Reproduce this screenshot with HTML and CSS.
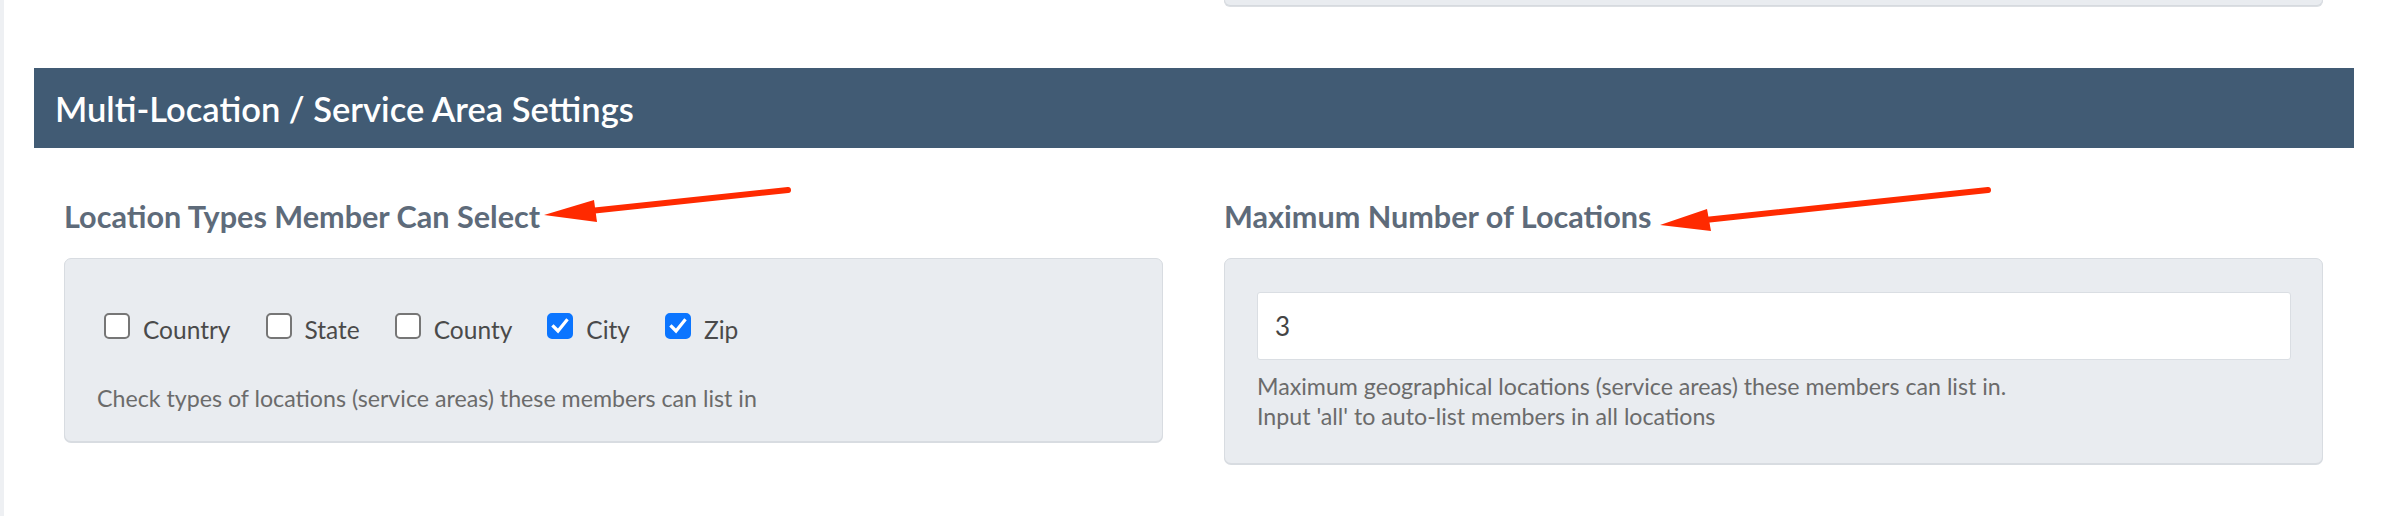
FILE: index.html
```html
<!DOCTYPE html>
<html>
<head>
<meta charset="utf-8">
<link rel="stylesheet" href="styles.css">
</head>
<body>
<div class="page">
  <div class="strip"></div>
  <div class="main">
    <div class="cols prev">
      <div class="col"></div>
      <div class="col"><div class="prev-card"></div></div>
    </div>
    <div class="section-bar">Multi-Location / Service Area Settings</div>
    <div class="cols">
      <div class="col">
        <div class="field-label">Location Types Member Can Select</div>
        <div class="card card-left">
          <div class="checks">
            <label class="check"><span class="box"></span><span class="ctext">Country</span></label>
            <label class="check"><span class="box"></span><span class="ctext">State</span></label>
            <label class="check"><span class="box"></span><span class="ctext">County</span></label>
            <label class="check"><span class="box on"><svg viewBox="0 0 26 26" width="26" height="26"><path d="M6.5 13.5 L11 18 L19.5 7.5" fill="none" stroke="#fff" stroke-width="3.2" stroke-linecap="square"/></svg></span><span class="ctext">City</span></label>
            <label class="check"><span class="box on"><svg viewBox="0 0 26 26" width="26" height="26"><path d="M6.5 13.5 L11 18 L19.5 7.5" fill="none" stroke="#fff" stroke-width="3.2" stroke-linecap="square"/></svg></span><span class="ctext">Zip</span></label>
          </div>
          <div class="help">Check types of locations (service areas) these members can list in</div>
        </div>
      </div>
      <div class="col">
        <div class="field-label">Maximum Number of Locations</div>
        <div class="card card-right">
          <div class="input">3</div>
          <div class="help help-right">Maximum geographical locations (service areas) these members can list in.<br>Input 'all' to auto-list members in all locations</div>
        </div>
      </div>
    </div>
  </div>
  <svg class="arrows" width="2384" height="516" viewBox="0 0 2384 516">
    <line x1="788" y1="190" x2="590" y2="211" stroke="#ff2a00" stroke-width="6" stroke-linecap="round"/>
    <polygon points="544,215 594,200 597,222" fill="#ff2a00"/>
    <line x1="1988" y1="190" x2="1705" y2="220" stroke="#ff2a00" stroke-width="6" stroke-linecap="round"/>
    <polygon points="1660,225 1707,209 1711,231" fill="#ff2a00"/>
  </svg>
</div>
</body>
</html>
```
FILE: styles.css
```css
* { box-sizing: border-box; }
html, body { margin: 0; padding: 0; background: #fff; }
body { font-family: Lato, "Open Sans", sans-serif; }
.page { position: relative; display: flex; min-height: 516px; overflow: hidden; }
.strip { width: 4px; flex: none; background: #eef0f3; }
.main { flex: 1; padding: 0 30px; }
.cols { display: grid; grid-template-columns: 1fr 1fr; }
.col { padding: 0 31px 0 30px; }
.prev-card { height: 6px; background: #e9ecf0; border: 1px solid #d6dadf; border-top: none; border-radius: 0 0 7px 7px; box-shadow: 0 1px 0 #dcdfe3; }
.section-bar { margin-top: 62px; height: 80px; background: #415b74; color: #fff; display: flex; align-items: center; padding-left: 21px; font-size: 34.5px; font-weight: 600; }
.cols:not(.prev) { margin-top: 51px; }
.field-label { font-size: 30.6px; font-weight: 700; color: #5e6b7a; line-height: 36px; }
.card { margin-top: 23px; background: #e9ecf0; border: 1px solid #d8dce1; border-radius: 7px; box-shadow: 0 1px 0 #d8dce1; }
.card-left { height: 184px; padding: 54px 32px 0 32px; }
.card-right { height: 206px; padding: 33px 31px 0 32px; }
.checks { display: flex; align-items: flex-start; padding-left: 7px; }
.check { display: flex; align-items: flex-start; margin-right: 35px; }
.box { width: 26px; height: 26px; border: 2px solid #767676; border-radius: 5px; background: #fff; flex: none; }
.box.on { background: #0b75ff; border-color: #0b75ff; display: flex; align-items: center; justify-content: center; }
.box.on svg { flex: none; }
.ctext { margin-left: 13px; font-size: 24.5px; line-height: 26px; color: #4a4a4a; padding-top: 4px; }
.help { font-size: 23.2px; line-height: 30px; color: #6b6b6b; margin-top: 40px; }
.input { height: 68px; background: #fff; border: 1px solid #dadee3; border-radius: 3px; padding-left: 17px; display: flex; align-items: center; font-size: 26px; color: #444; }
.help-right { margin-top: 11px; }
.arrows { position: absolute; left: 0; top: 0; pointer-events: none; }
```
